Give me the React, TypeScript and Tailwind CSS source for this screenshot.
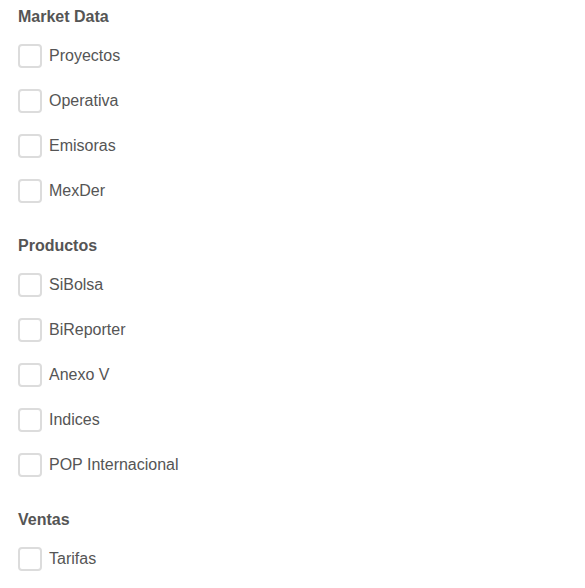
import React from "react";

const sections = [
  { title: "Market Data", items: ["Proyectos", "Operativa", "Emisoras", "MexDer"] },
  { title: "Productos", items: ["SiBolsa", "BiReporter", "Anexo V", "Indices", "POP Internacional"] },
  { title: "Ventas", items: ["Tarifas"] },
];

export default function App() {
  return (
    <div
      className="w-[585px] h-[588px] bg-white pl-[18px] pt-[5px] text-[#555] overflow-hidden"
      style={{ fontFamily: '"Liberation Sans", Arial, sans-serif' }}
    >
      <div className="flex flex-col gap-[21px]">
        {sections.map((s) => (
          <div key={s.title} className="flex flex-col">
            <div className="h-[24px] leading-[24px] text-[16px] font-bold mb-[4px]">{s.title}</div>
            {s.items.map((it) => (
              <label key={it} className="h-[45px] flex items-center gap-[7px] cursor-pointer">
                <span className="w-[24px] h-[24px] border-2 border-[#dcdcdc] rounded-[4px] bg-white shrink-0" />
                <span className="text-[16px] leading-[20px]">{it}</span>
              </label>
            ))}
          </div>
        ))}
      </div>
    </div>
  );
}
